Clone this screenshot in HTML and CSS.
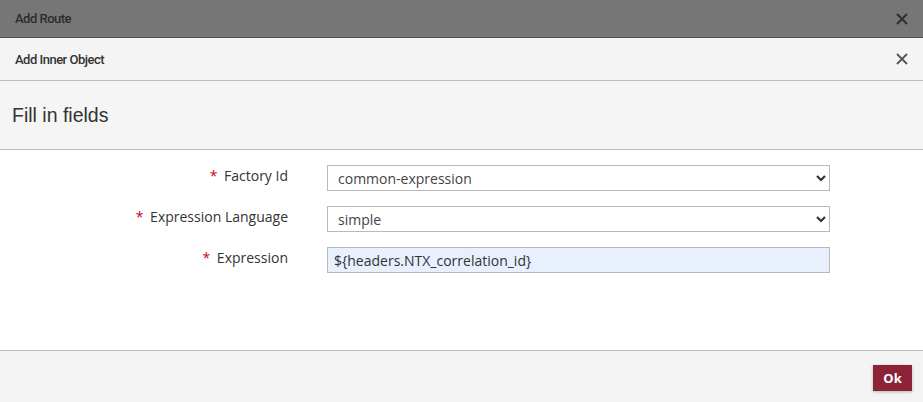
FILE: index.html
```html
<!DOCTYPE html>
<html>
<head>
<meta charset="utf-8">
<link rel="stylesheet" href="styles.css">
</head>
<body>
<div class="topbar">
  <span class="bar-title">Add Route</span>
  <svg class="close dark" width="12" height="12" viewBox="0 0 12 12"><path d="M1 1L11 11M11 1L1 11" stroke="#2e2e2e" stroke-width="2"/></svg>
</div>
<div class="subhead">
  <span class="bar-title">Add Inner Object</span>
  <svg class="close" width="12" height="12" viewBox="0 0 12 12"><path d="M1 1L11 11M11 1L1 11" stroke="#555" stroke-width="1.8"/></svg>
</div>
<div class="title">Fill in fields</div>
<div class="content">
  <div class="form">
    <label class="lbl"><span class="req">*</span> Factory Id</label>
    <div class="sel">
      <select><option>common-expression</option></select>
      <svg class="chev" width="10" height="8" viewBox="0 0 10 8"><path d="M1 2L5 6L9 2" stroke="#333" stroke-width="2.2" fill="none"/></svg>
    </div>
    <label class="lbl"><span class="req">*</span> Expression Language</label>
    <div class="sel">
      <select><option>simple</option></select>
      <svg class="chev" width="10" height="8" viewBox="0 0 10 8"><path d="M1 2L5 6L9 2" stroke="#333" stroke-width="2.2" fill="none"/></svg>
    </div>
    <label class="lbl"><span class="req">*</span> Expression</label>
    <input class="txt" type="text" value="${headers.NTX_correlation_id}">
  </div>
</div>
<div class="footer">
  <button class="ok">Ok</button>
</div>
</body>
</html>
```
FILE: styles.css
```css
html, body { margin: 0; padding: 0; }
body { width: 923px; height: 402px; overflow: hidden; background: #fff; font-family: "Open Sans", sans-serif; }
.topbar {
  height: 37px; background: #767676; border-bottom: 1px solid #4f4f4f;
  display: flex; align-items: center; justify-content: space-between;
  padding: 0 15px;
}
.bar-title { font-family: Roboto, "Liberation Sans", sans-serif; font-weight: 500; font-size: 13px; letter-spacing: -0.5px; color: #2c2c2c; }
.subhead {
  height: 42px; background: #f4f4f4; border-bottom: 1px solid #bdbdbd;
  display: flex; align-items: center; justify-content: space-between;
  padding: 0 15px;
}
.subhead .bar-title { color: #333; }
.close { display: block; }
.title {
  height: 68px; background: #f5f5f5; border-bottom: 1px solid #bdbdbd;
  display: flex; align-items: center; padding-left: 12px;
  font-family: "Liberation Sans", Arial, sans-serif; font-size: 19.5px; color: #333;
}
.content { height: 201px; box-sizing: border-box; padding-top: 15px; border-bottom: 1px solid #bdbdbd; }
.form {
  display: grid; grid-template-columns: 288px 503px; column-gap: 39px; row-gap: 15px;
  align-items: center;
}
.lbl { text-align: right; font-size: 14px; color: #333; line-height: 20px; margin-top: -4px; }
.req { color: #d0021b; margin-right: 3px; }
.sel { position: relative; height: 26px; }
select {
  appearance: none; -webkit-appearance: none; width: 100%; height: 26px; box-sizing: border-box;
  border: 1px solid #b9b9b9; background: #fff; border-radius: 0;
  font-family: "Open Sans", sans-serif; font-size: 14px; color: #444; padding: 0 0 0 10px; margin: 0;
}
.chev { position: absolute; right: 4px; top: 9px; pointer-events: none; }
.txt {
  width: 100%; height: 26px; box-sizing: border-box; margin: 0;
  border: 1px solid #b9b9b9; background: #e8f0fe; border-radius: 0;
  font-family: "Open Sans", sans-serif; font-size: 14px; color: #333; padding: 0 0 0 6px;
}
.footer { height: 51px; background: #f3f3f3; display: flex; justify-content: flex-end; align-items: flex-start; padding: 14px 11px 0 0; box-sizing: border-box; }
.ok {
  width: 39px; height: 26px; border: 0; background: #8c2339; color: #fff;
  font-family: "Open Sans", sans-serif; font-weight: 700; font-size: 13px; padding: 0;
  box-shadow: 0 1px 3px rgba(0,0,0,0.25);
}
```
